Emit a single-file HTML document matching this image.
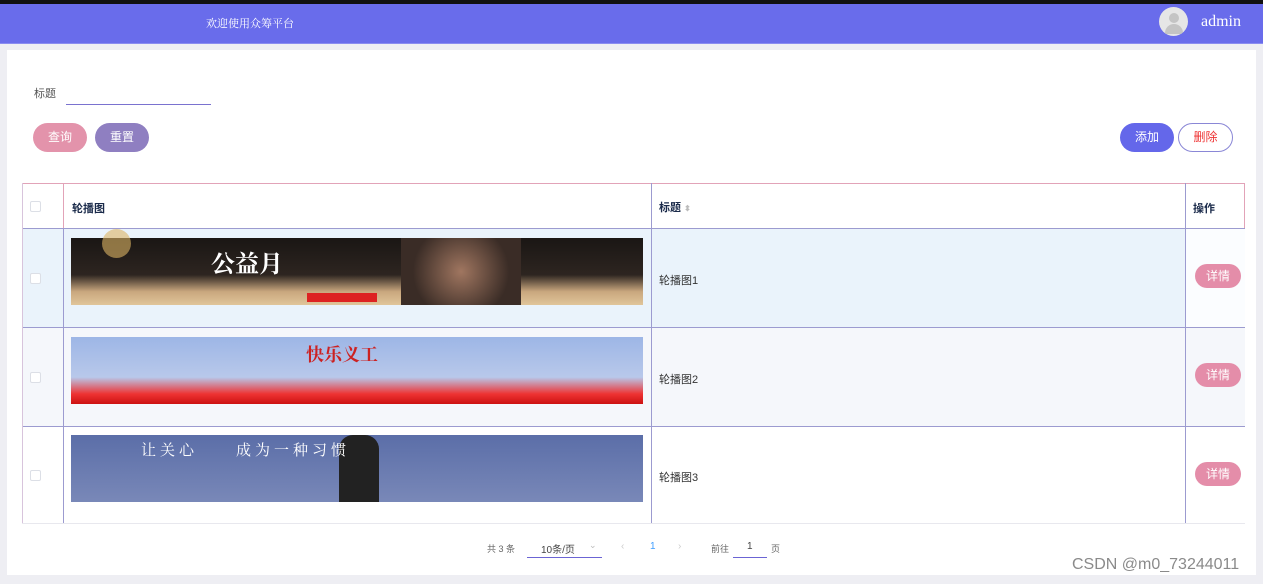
<!DOCTYPE html>
<html><head><meta charset="utf-8"><style>
*{margin:0;padding:0;box-sizing:border-box}
body{width:1263px;height:584px;background:#eeeef3;font-family:"Liberation Sans","Noto Sans CJK SC",sans-serif;position:relative;overflow:hidden}
.abs{position:absolute}
.top{left:0;top:0;width:1263px;height:4px;background:#111}
.hdr{left:0;top:4px;width:1263px;height:40px;background:#696ceb;border-bottom:1px solid #8a8cf0}
.panel{left:7px;top:50px;width:1249px;height:525px;background:#fff}
.btn{border-radius:15px;color:#fff;font-size:12px;text-align:center;line-height:29px;height:29px}
.cb{width:11px;height:11px;border:1px solid #dcdfe6;border-radius:2px;background:#fff;position:absolute}
.txt{font-size:11px;color:#333}
.det{width:46px;height:24px;background:#e48da9;border-radius:12px;color:#fff;font-size:12px;line-height:24px;text-align:center}
</style></head><body>
<div class="abs top"></div>
<div class="abs hdr">
 <div class="abs" style="left:206px;top:11px;color:#fff;font-size:11px;font-family:'Noto Serif CJK SC',serif">欢迎使用众筹平台</div>
 <div class="abs" style="left:1159px;top:3px;width:29px;height:29px;border-radius:50%;background:#e6e6e6;overflow:hidden">
  <div class="abs" style="left:10px;top:6px;width:10px;height:10px;border-radius:50%;background:#c4c4c4"></div>
  <div class="abs" style="left:6px;top:17px;width:18px;height:10px;border-radius:9px 9px 0 0;background:#c4c4c4"></div>
 </div>
 <div class="abs" style="left:1201px;top:9px;color:#fff;font-size:16px;font-family:'Liberation Serif',serif">admin</div>
</div>
<div class="abs panel"></div>
<div class="abs" style="left:34px;top:85px;font-size:11px;color:#555">标题</div>
<div class="abs" style="left:66px;top:104px;width:145px;height:1px;background:#7a72cf"></div>
<div class="abs btn" style="left:33px;top:123px;width:54px;background:#e393ab">查询</div>
<div class="abs btn" style="left:95px;top:123px;width:54px;background:#8f7fc1">重置</div>
<div class="abs btn" style="left:1120px;top:123px;width:54px;background:#6467ea">添加</div>
<div class="abs btn" style="left:1178px;top:123px;width:55px;background:#fff;border:1px solid #8a87d6;color:#e33;line-height:27px">删除</div>
<!-- row backgrounds -->
<div class="abs" style="left:23px;top:229px;width:1222px;height:98px;background:#eaf3fb"></div>
<div class="abs" style="left:1186px;top:229px;width:59px;height:98px;background:#fbfdff"></div>
<div class="abs" style="left:23px;top:328px;width:1222px;height:98px;background:#f5f7fb"></div>
<!-- grid lines -->
<div class="abs" style="left:22px;top:183px;width:1223px;height:1px;background:#e2a3b8"></div>
<div class="abs" style="left:22px;top:228px;width:1223px;height:1px;background:#9c9bd0"></div>
<div class="abs" style="left:22px;top:327px;width:1223px;height:1px;background:#9c9bd0"></div>
<div class="abs" style="left:22px;top:426px;width:1223px;height:1px;background:#9c9bd0"></div>
<div class="abs" style="left:22px;top:183px;width:1px;height:340px;background:#d8c4dc"></div>
<div class="abs" style="left:63px;top:183px;width:1px;height:45px;background:#e2a3b8"></div>
<div class="abs" style="left:63px;top:228px;width:1px;height:295px;background:#9c9bd0"></div>
<div class="abs" style="left:651px;top:183px;width:1px;height:340px;background:#9c9bd0"></div>
<div class="abs" style="left:1185px;top:183px;width:1px;height:340px;background:#9c9bd0"></div>
<div class="abs" style="left:1244px;top:183px;width:1px;height:45px;background:#e2a3b8"></div>
<div class="cb" style="left:30px;top:201px"></div>
<div class="abs" style="left:72px;top:200px;font-size:11px;font-weight:bold;color:#1a2a4a">轮播图</div>
<div class="abs" style="left:659px;top:199px;font-size:11px;font-weight:bold;color:#1a2a4a">标题 <span style="color:#bbb;font-size:8px">⬍</span></div>
<div class="abs" style="left:1193px;top:200px;font-size:11px;font-weight:bold;color:#1a2a4a">操作</div>
<div class="cb" style="left:30px;top:273px"></div>
<div class="cb" style="left:30px;top:372px"></div>
<div class="cb" style="left:30px;top:470px"></div>
<div class="abs" style="left:71px;top:238px;width:572px;height:67px;background:linear-gradient(180deg,#1a1614 0%,#2d2520 55%,#c9a77e 80%,#e0c59a 100%)">
 <div class="abs" style="left:140px;top:6px;color:#fff;font-size:24px;font-weight:bold;font-family:'Noto Serif CJK SC',serif">公益月</div>
 <div class="abs" style="left:330px;top:0;width:120px;height:67px;background:radial-gradient(circle,#a07660,#3a2c26 70%)"></div>
 <div class="abs" style="left:236px;top:55px;width:70px;height:9px;background:#d22"></div>
</div>
<div class="abs" style="left:71px;top:337px;width:572px;height:67px;background:linear-gradient(180deg,#9db6e6 0%,#b8c8ea 60%,#e33 85%,#c11 100%)">
 <div class="abs" style="left:235px;top:4px;color:#c22;font-size:18px;font-weight:bold;font-family:'Noto Serif CJK SC',serif">快乐义工</div>
</div>
<div class="abs" style="left:71px;top:435px;width:572px;height:67px;background:linear-gradient(180deg,#5b6ea8,#7988b8)">
 <div class="abs" style="left:268px;top:0;width:40px;height:67px;background:#222;border-radius:14px 14px 0 0"></div>
 <div class="abs" style="left:70px;top:4px;color:#fff;font-size:15px;font-family:'Noto Serif CJK SC',serif;letter-spacing:4px">让关心　　成为一种习惯</div>
</div>
<div class="abs" style="left:102px;top:229px;width:29px;height:29px;border-radius:50%;background:rgba(220,180,100,.6)"></div>
<div class="abs txt" style="left:659px;top:272px">轮播图1</div>
<div class="abs txt" style="left:659px;top:371px">轮播图2</div>
<div class="abs txt" style="left:659px;top:469px">轮播图3</div>
<div class="abs det" style="left:1195px;top:264px">详情</div>
<div class="abs det" style="left:1195px;top:363px">详情</div>
<div class="abs det" style="left:1195px;top:462px">详情</div>
<div class="abs" style="left:22px;top:523px;width:1223px;height:1px;background:#e8e8ee"></div>
<!-- pager -->
<div class="abs" style="left:487px;top:542px;font-size:9px;color:#666">共 3 条</div>
<div class="abs" style="left:541px;top:541px;font-size:10px;color:#444">10条/页</div>
<div class="abs" style="left:589px;top:540px;font-size:9px;color:#bbb">⌄</div>
<div class="abs" style="left:527px;top:557px;width:75px;height:1px;background:#6b64d4"></div>
<div class="abs" style="left:621px;top:541px;font-size:10px;color:#ccc">‹</div>
<div class="abs" style="left:650px;top:541px;font-size:10px;color:#409eff">1</div>
<div class="abs" style="left:678px;top:541px;font-size:10px;color:#ccc">›</div>
<div class="abs" style="left:711px;top:542px;font-size:9px;color:#666">前往</div>
<div class="abs" style="left:747px;top:541px;font-size:10px;color:#444">1</div>
<div class="abs" style="left:733px;top:557px;width:34px;height:1px;background:#6b64d4"></div>
<div class="abs" style="left:771px;top:542px;font-size:9px;color:#666">页</div>
<div class="abs" style="left:1072px;top:556px;font-size:16px;color:#8a8a8a">CSDN @m0_73244011</div>
</body></html>
